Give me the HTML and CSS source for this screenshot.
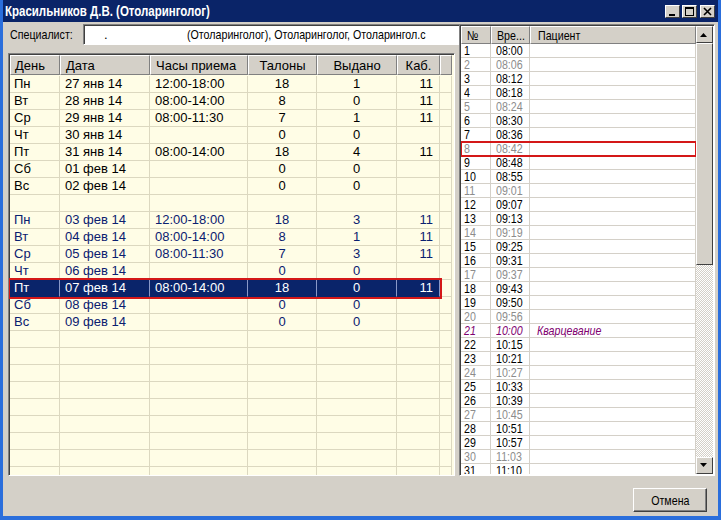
FILE: index.html
```html
<!DOCTYPE html>
<html lang="ru">
<head>
<meta charset="utf-8">
<title>Красильников Д.В.</title>
<link rel="stylesheet" href="styles.css">
</head>
<body>
<div class="win">
  <div class="titlebar">
    <span class="title"><span class="nw">Красильников Д.В. (Отоларинголог)</span></span>
    <div class="tbtns">
      <span class="tb"><svg width="13" height="11" viewBox="0 0 13 11"><rect x="3" y="8" width="6" height="2" fill="#000"/></svg></span>
      <span class="tb"><svg width="13" height="11" viewBox="0 0 13 11"><rect x="2.5" y="1.5" width="8" height="8" fill="none" stroke="#000"/><rect x="2" y="1" width="9" height="2" fill="#000"/></svg></span>
      <span class="tb tb-close"><svg width="13" height="11" viewBox="0 0 13 11"><path d="M3 2 L10 9 M10 2 L3 9" stroke="#000" stroke-width="1.6"/></svg></span>
    </div>
  </div>
  <div class="body">
    <div class="main">
      <div class="leftcol">
        <div class="spec">
          <span class="lbl"><span class="nw">Специалист:</span></span>
          <div class="combo">
            <div class="combo-text"><span class="blur">.</span><span class="val"><span class="nw">(Отоларинголог), Отоларинголог, Отоларингол.с</span></span></div>
            <div class="combo-btn"><svg width="9" height="5" viewBox="0 0 9 5"><path d="M0 0 H7 L3.5 4 Z" fill="#000"/></svg></div>
          </div>
        </div>
        <div class="lgrid">
          <div class="lrow lhead">
            <div class="cells">
              <div class="c c1">День</div><div class="c c2">Дата</div><div class="c c3">Часы приема</div><div class="c c4">Талоны</div><div class="c c5">Выдано</div><div class="c c6">Каб.</div>
            </div><div class="c cf"></div>
          </div>
          <div class="lrow"><div class="cells"><div class="c c1">Пн</div><div class="c c2">27 янв 14</div><div class="c c3">12:00-18:00</div><div class="c c4">18</div><div class="c c5">1</div><div class="c c6">11</div></div><div class="c cf"></div></div>
          <div class="lrow"><div class="cells"><div class="c c1">Вт</div><div class="c c2">28 янв 14</div><div class="c c3">08:00-14:00</div><div class="c c4">8</div><div class="c c5">0</div><div class="c c6">11</div></div><div class="c cf"></div></div>
          <div class="lrow"><div class="cells"><div class="c c1">Ср</div><div class="c c2">29 янв 14</div><div class="c c3">08:00-11:30</div><div class="c c4">7</div><div class="c c5">1</div><div class="c c6">11</div></div><div class="c cf"></div></div>
          <div class="lrow"><div class="cells"><div class="c c1">Чт</div><div class="c c2">30 янв 14</div><div class="c c3"></div><div class="c c4">0</div><div class="c c5">0</div><div class="c c6"></div></div><div class="c cf"></div></div>
          <div class="lrow"><div class="cells"><div class="c c1">Пт</div><div class="c c2">31 янв 14</div><div class="c c3">08:00-14:00</div><div class="c c4">18</div><div class="c c5">4</div><div class="c c6">11</div></div><div class="c cf"></div></div>
          <div class="lrow"><div class="cells"><div class="c c1">Сб</div><div class="c c2">01 фев 14</div><div class="c c3"></div><div class="c c4">0</div><div class="c c5">0</div><div class="c c6"></div></div><div class="c cf"></div></div>
          <div class="lrow"><div class="cells"><div class="c c1">Вс</div><div class="c c2">02 фев 14</div><div class="c c3"></div><div class="c c4">0</div><div class="c c5">0</div><div class="c c6"></div></div><div class="c cf"></div></div>
          <div class="lrow"><div class="cells"><div class="c c1"></div><div class="c c2"></div><div class="c c3"></div><div class="c c4"></div><div class="c c5"></div><div class="c c6"></div></div><div class="c cf"></div></div>
          <div class="lrow blue"><div class="cells"><div class="c c1">Пн</div><div class="c c2">03 фев 14</div><div class="c c3">12:00-18:00</div><div class="c c4">18</div><div class="c c5">3</div><div class="c c6">11</div></div><div class="c cf"></div></div>
          <div class="lrow blue"><div class="cells"><div class="c c1">Вт</div><div class="c c2">04 фев 14</div><div class="c c3">08:00-14:00</div><div class="c c4">8</div><div class="c c5">1</div><div class="c c6">11</div></div><div class="c cf"></div></div>
          <div class="lrow blue"><div class="cells"><div class="c c1">Ср</div><div class="c c2">05 фев 14</div><div class="c c3">08:00-11:30</div><div class="c c4">7</div><div class="c c5">3</div><div class="c c6">11</div></div><div class="c cf"></div></div>
          <div class="lrow blue"><div class="cells"><div class="c c1">Чт</div><div class="c c2">06 фев 14</div><div class="c c3"></div><div class="c c4">0</div><div class="c c5">0</div><div class="c c6"></div></div><div class="c cf"></div></div>
          <div class="lrow sel"><div class="cells"><div class="c c1">Пт</div><div class="c c2">07 фев 14</div><div class="c c3">08:00-14:00</div><div class="c c4">18</div><div class="c c5">0</div><div class="c c6">11</div></div><div class="c cf"></div></div>
          <div class="lrow blue"><div class="cells"><div class="c c1">Сб</div><div class="c c2">08 фев 14</div><div class="c c3"></div><div class="c c4">0</div><div class="c c5">0</div><div class="c c6"></div></div><div class="c cf"></div></div>
          <div class="lrow blue"><div class="cells"><div class="c c1">Вс</div><div class="c c2">09 фев 14</div><div class="c c3"></div><div class="c c4">0</div><div class="c c5">0</div><div class="c c6"></div></div><div class="c cf"></div></div>
          <div class="lrow"><div class="cells"><div class="c c1"></div><div class="c c2"></div><div class="c c3"></div><div class="c c4"></div><div class="c c5"></div><div class="c c6"></div></div><div class="c cf"></div></div>
          <div class="lrow"><div class="cells"><div class="c c1"></div><div class="c c2"></div><div class="c c3"></div><div class="c c4"></div><div class="c c5"></div><div class="c c6"></div></div><div class="c cf"></div></div>
          <div class="lrow"><div class="cells"><div class="c c1"></div><div class="c c2"></div><div class="c c3"></div><div class="c c4"></div><div class="c c5"></div><div class="c c6"></div></div><div class="c cf"></div></div>
          <div class="lrow"><div class="cells"><div class="c c1"></div><div class="c c2"></div><div class="c c3"></div><div class="c c4"></div><div class="c c5"></div><div class="c c6"></div></div><div class="c cf"></div></div>
          <div class="lrow"><div class="cells"><div class="c c1"></div><div class="c c2"></div><div class="c c3"></div><div class="c c4"></div><div class="c c5"></div><div class="c c6"></div></div><div class="c cf"></div></div>
          <div class="lrow"><div class="cells"><div class="c c1"></div><div class="c c2"></div><div class="c c3"></div><div class="c c4"></div><div class="c c5"></div><div class="c c6"></div></div><div class="c cf"></div></div>
          <div class="lrow"><div class="cells"><div class="c c1"></div><div class="c c2"></div><div class="c c3"></div><div class="c c4"></div><div class="c c5"></div><div class="c c6"></div></div><div class="c cf"></div></div>
          <div class="lrow"><div class="cells"><div class="c c1"></div><div class="c c2"></div><div class="c c3"></div><div class="c c4"></div><div class="c c5"></div><div class="c c6"></div></div><div class="c cf"></div></div>
          <div class="lrow"><div class="cells"><div class="c c1"></div><div class="c c2"></div><div class="c c3"></div><div class="c c4"></div><div class="c c5"></div><div class="c c6"></div></div><div class="c cf"></div></div>
        </div>
      </div>
      <div class="rgrid">
        <div class="rtable">
          <div class="rrow rhead"><div class="r r1"><span class="nw">№</span></div><div class="r r2"><span class="nw">Вре...</span></div><div class="r r3"><span class="nw">Пациент</span></div></div>
          <div class="rrow"><div class="r r1"><span class="nw">1</span></div><div class="r r2"><span class="nw">08:00</span></div><div class="r r3"></div></div>
          <div class="rrow g"><div class="r r1"><span class="nw">2</span></div><div class="r r2"><span class="nw">08:06</span></div><div class="r r3"></div></div>
          <div class="rrow"><div class="r r1"><span class="nw">3</span></div><div class="r r2"><span class="nw">08:12</span></div><div class="r r3"></div></div>
          <div class="rrow"><div class="r r1"><span class="nw">4</span></div><div class="r r2"><span class="nw">08:18</span></div><div class="r r3"></div></div>
          <div class="rrow g"><div class="r r1"><span class="nw">5</span></div><div class="r r2"><span class="nw">08:24</span></div><div class="r r3"></div></div>
          <div class="rrow"><div class="r r1"><span class="nw">6</span></div><div class="r r2"><span class="nw">08:30</span></div><div class="r r3"></div></div>
          <div class="rrow"><div class="r r1"><span class="nw">7</span></div><div class="r r2"><span class="nw">08:36</span></div><div class="r r3"></div></div>
          <div class="rrow g mark"><div class="r r1"><span class="nw">8</span></div><div class="r r2"><span class="nw">08:42</span></div><div class="r r3"></div></div>
          <div class="rrow"><div class="r r1"><span class="nw">9</span></div><div class="r r2"><span class="nw">08:48</span></div><div class="r r3"></div></div>
          <div class="rrow"><div class="r r1"><span class="nw">10</span></div><div class="r r2"><span class="nw">08:55</span></div><div class="r r3"></div></div>
          <div class="rrow g"><div class="r r1"><span class="nw">11</span></div><div class="r r2"><span class="nw">09:01</span></div><div class="r r3"></div></div>
          <div class="rrow"><div class="r r1"><span class="nw">12</span></div><div class="r r2"><span class="nw">09:07</span></div><div class="r r3"></div></div>
          <div class="rrow"><div class="r r1"><span class="nw">13</span></div><div class="r r2"><span class="nw">09:13</span></div><div class="r r3"></div></div>
          <div class="rrow g"><div class="r r1"><span class="nw">14</span></div><div class="r r2"><span class="nw">09:19</span></div><div class="r r3"></div></div>
          <div class="rrow"><div class="r r1"><span class="nw">15</span></div><div class="r r2"><span class="nw">09:25</span></div><div class="r r3"></div></div>
          <div class="rrow"><div class="r r1"><span class="nw">16</span></div><div class="r r2"><span class="nw">09:31</span></div><div class="r r3"></div></div>
          <div class="rrow g"><div class="r r1"><span class="nw">17</span></div><div class="r r2"><span class="nw">09:37</span></div><div class="r r3"></div></div>
          <div class="rrow"><div class="r r1"><span class="nw">18</span></div><div class="r r2"><span class="nw">09:43</span></div><div class="r r3"></div></div>
          <div class="rrow"><div class="r r1"><span class="nw">19</span></div><div class="r r2"><span class="nw">09:50</span></div><div class="r r3"></div></div>
          <div class="rrow g"><div class="r r1"><span class="nw">20</span></div><div class="r r2"><span class="nw">09:56</span></div><div class="r r3"></div></div>
          <div class="rrow p"><div class="r r1"><span class="nw">21</span></div><div class="r r2"><span class="nw">10:00</span></div><div class="r r3"><span class="nw">Кварцевание</span></div></div>
          <div class="rrow"><div class="r r1"><span class="nw">22</span></div><div class="r r2"><span class="nw">10:15</span></div><div class="r r3"></div></div>
          <div class="rrow"><div class="r r1"><span class="nw">23</span></div><div class="r r2"><span class="nw">10:21</span></div><div class="r r3"></div></div>
          <div class="rrow g"><div class="r r1"><span class="nw">24</span></div><div class="r r2"><span class="nw">10:27</span></div><div class="r r3"></div></div>
          <div class="rrow"><div class="r r1"><span class="nw">25</span></div><div class="r r2"><span class="nw">10:33</span></div><div class="r r3"></div></div>
          <div class="rrow"><div class="r r1"><span class="nw">26</span></div><div class="r r2"><span class="nw">10:39</span></div><div class="r r3"></div></div>
          <div class="rrow g"><div class="r r1"><span class="nw">27</span></div><div class="r r2"><span class="nw">10:45</span></div><div class="r r3"></div></div>
          <div class="rrow"><div class="r r1"><span class="nw">28</span></div><div class="r r2"><span class="nw">10:51</span></div><div class="r r3"></div></div>
          <div class="rrow"><div class="r r1"><span class="nw">29</span></div><div class="r r2"><span class="nw">10:57</span></div><div class="r r3"></div></div>
          <div class="rrow g"><div class="r r1"><span class="nw">30</span></div><div class="r r2"><span class="nw">11:03</span></div><div class="r r3"></div></div>
          <div class="rrow"><div class="r r1"><span class="nw">31</span></div><div class="r r2"><span class="nw">11:10</span></div><div class="r r3"></div></div>
        </div>
        <div class="vscroll">
          <div class="sbtn"><svg width="9" height="5" viewBox="0 0 9 5"><path d="M0 5 H7 L3.5 1 Z" fill="#000"/></svg></div>
          <div class="thumb"></div>
          <div class="track"></div>
          <div class="sbtn"><svg width="9" height="5" viewBox="0 0 9 5"><path d="M0 0 H7 L3.5 4 Z" fill="#000"/></svg></div>
        </div>
      </div>
    </div>
    <div class="footer">
      <button class="btn"><span class="nw nwc">Отмена</span></button>
    </div>
  </div>
</div>
</body>
</html>
```

FILE: styles.css
```css
* { box-sizing: border-box; }
html, body { margin: 0; padding: 0; }
body { width: 721px; height: 520px; overflow: hidden; background: #d4d0c8; }

.win {
  width: 721px; height: 520px;
  display: flex; flex-direction: column;
  border-left: 3px solid #2a6edc;
  border-right: 3px solid #2a6edc;
  border-bottom: 4px solid #2a6edc;
  background: #d4d0c8;
  font-family: "Liberation Sans", Arial, sans-serif;
}

/* condensed look of the dialog's narrow font */
.nw {
  display: inline-block;
  white-space: nowrap;
  transform: scaleX(0.82);
  transform-origin: 0 50%;
}
.nwc { transform-origin: 50% 50%; }

.titlebar {
  height: 22px; flex: none;
  background: #0a2468;
  display: flex; align-items: center; justify-content: space-between;
  padding: 0 3px 0 2px;
}
.title { color: #fff; font-weight: bold; font-size: 14px; white-space: nowrap; }
.tbtns { display: flex; gap: 2px; }
.tb {
  width: 15px; height: 13px;
  background: #d4d0c8;
  border: 1px solid; border-color: #fff #404040 #404040 #fff;
  display: flex; align-items: center; justify-content: center;
}
.tb-close { margin-left: 1px; }

.body { flex: 1; display: flex; flex-direction: column; padding: 2px 3px 0 5px; }
.main { height: 452px; display: flex; gap: 4px; }

.leftcol { width: 447px; display: flex; flex-direction: column; gap: 8px; }
.spec { height: 21px; display: flex; align-items: center; }
.lbl { font-size: 13px; color: #000; width: 75px; flex: none; padding-left: 2px; white-space: nowrap; }
.combo {
  flex: 1; height: 21px; display: flex;
  background: #fff;
  border: 1px solid; border-color: #808080 #fff #fff #808080;
  box-shadow: inset 1px 1px 0 #404040;
  padding: 2px;
}
.combo-text { flex: 1; display: flex; align-items: center; overflow: hidden; white-space: nowrap; font-size: 13px; }
.blur { width: 101px; padding-left: 18px; flex: none; }
.val { color: #000; }
.combo-btn {
  width: 17px; flex: none;
  background: #d4d0c8;
  border: 1px solid; border-color: #fff #404040 #404040 #fff;
  display: flex; align-items: center; justify-content: center;
}

.lgrid {
  flex: 1; overflow: hidden;
  background: #fffde6;
  border: 1px solid; border-color: #808080 #fff #fff #808080;
  box-shadow: inset 1px 1px 0 #404040;
  padding: 1px 2px 0 1px;
  font-size: 13px;
  color: #000;
}
.lrow { display: flex; height: 17px; }
.cells { display: flex; width: 430px; flex: none; }
.c {
  height: 17px; line-height: 16px;
  border-right: 1px solid #dcd8c0; border-bottom: 1px solid #dcd8c0;
  white-space: nowrap; overflow: hidden;
}
.c1 { width: 50px; padding-left: 4px; }
.c2 { width: 90px; padding-left: 5px; }
.c3 { width: 98px; padding-left: 5px; }
.c4 { width: 69px; text-align: center; }
.c5 { width: 80px; text-align: center; }
.c6 { width: 43px; text-align: right; padding-right: 6px; }
.cf { flex: 1; }

.lhead { height: 20px; }
.lhead .c {
  height: 20px; line-height: 19px;
  background: #d4d0c8;
  border-top: 1px solid #fff;
  border-left: 1px solid #fff;
  border-right: 1px solid #808080;
  border-bottom: 1px solid #808080;
}
.lhead .c6 { text-align: center; padding-right: 0; }
.lhead + .lrow { margin-top: 1px; }

.blue { color: #0a2070; }
.sel .cells {
  background: #0a246a; color: #fff;
  outline: 2px solid #d41818;
  position: relative; z-index: 1;
}
.sel .cells .c { border-right-color: #8a98c8; border-bottom-color: #0a246a; }

.rgrid {
  width: 256px; display: flex;
  background: #fff;
  border: 1px solid; border-color: #808080 #fff #fff #808080;
  box-shadow: inset 1px 1px 0 #404040;
  padding: 1px;
}
.rtable { flex: 1; overflow: hidden; font-size: 13px; }
.rrow { display: flex; height: 14px; }
.r {
  height: 14px; line-height: 13px;
  border-right: 1px solid #d4d0c8; border-bottom: 1px solid #d4d0c8;
  white-space: nowrap; overflow: hidden;
}
.r1 { width: 30px; padding-left: 3px; }
.r2 { width: 39px; padding-left: 5px; }
.r3 { flex: 1; padding-left: 7px; }
.rhead { height: 18px; }
.rhead .r {
  height: 18px; line-height: 17px;
  background: #d4d0c8;
  border-top: 1px solid #fff; border-left: 1px solid #fff;
  border-right: 1px solid #808080; border-bottom: 1px solid #808080;
}
.rhead .r1 { padding-left: 5px; }
.g { color: #8c8c8c; }
.p { color: #800070; font-style: italic; }
.mark { outline: 2px solid #d41818; outline-offset: -1px; position: relative; z-index: 1; }

.vscroll { width: 17px; flex: none; display: flex; flex-direction: column; }
.sbtn {
  height: 17px; flex: none;
  background: #d4d0c8;
  border: 1px solid; border-color: #fff #404040 #404040 #fff;
  display: flex; align-items: center; justify-content: center;
}
.thumb {
  height: 222px; flex: none;
  background: #d4d0c8;
  border: 1px solid; border-color: #fff #404040 #404040 #fff;
}
.track {
  flex: 1;
  background: repeating-conic-gradient(#fff 0 25%, #d4d0c8 0 50%) 0 0 / 2px 2px;
}

.footer { display: flex; justify-content: flex-end; padding: 12px 8px 0 0; }
.btn {
  width: 74px; height: 24px;
  background: #d4d0c8;
  border: 1px solid; border-color: #fff #404040 #404040 #fff;
  box-shadow: inset -1px -1px 0 #808080;
  font-family: "Liberation Sans", Arial, sans-serif;
  font-size: 13px; color: #000;
  padding: 0;
}
```
